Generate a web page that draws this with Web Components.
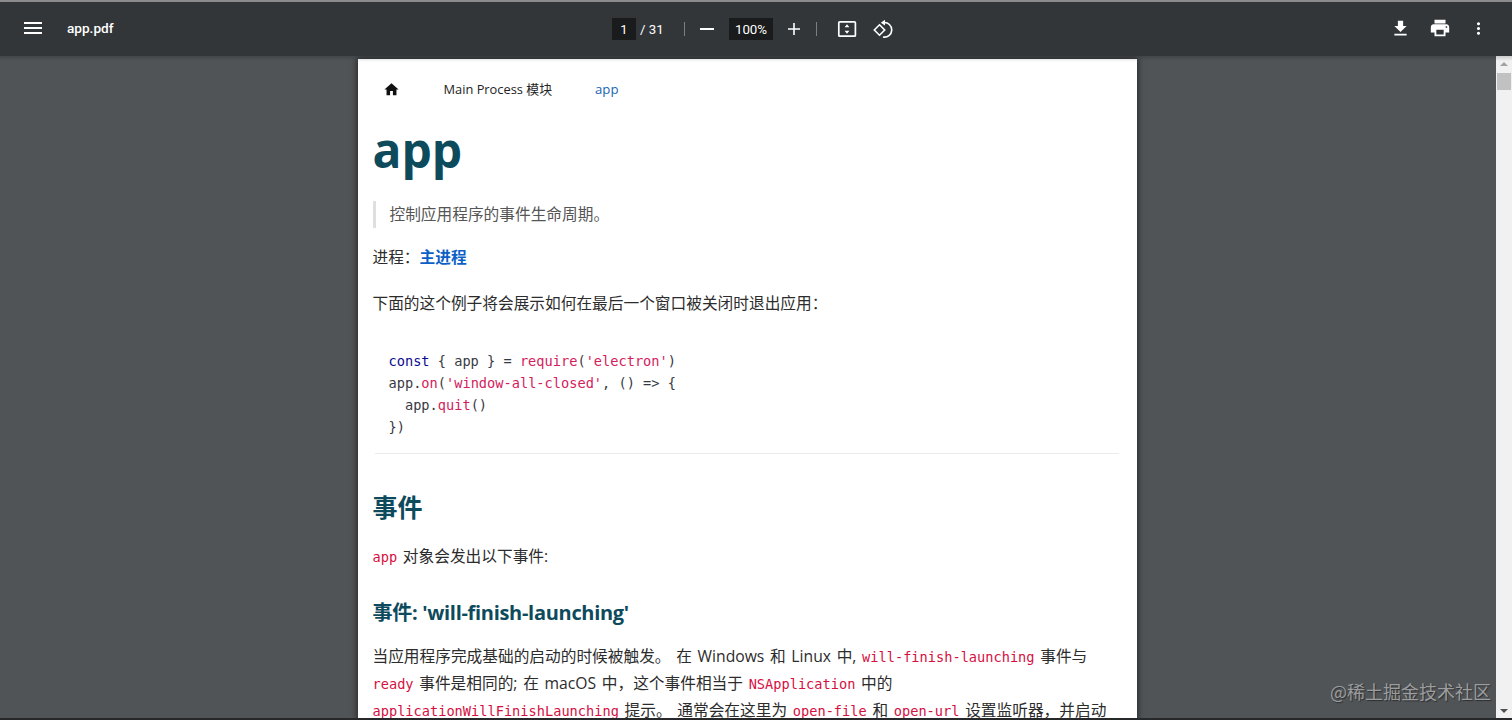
<!DOCTYPE html>
<html lang="zh"><head><meta charset="utf-8"><title>app.pdf</title>
<style>
html,body{margin:0;padding:0;height:720px;overflow:hidden;background:#525659}
body{font-family:"Open Sans","Noto Sans CJK SC",sans-serif}
</style></head><body>
<pdf-viewer>
  <pdf-toolbar slot="toolbar"></pdf-toolbar>
  <pdf-page slot="page">
    <doc-crumbs></doc-crumbs>
    <doc-title level="1">app</doc-title>
    <doc-quote>控制应用程序的事件生命周期。</doc-quote>
    <doc-p style="--mt:16px">进程：<a style="color:#0b5fc6;font-weight:700;text-decoration:none">主进程</a></doc-p>
    <doc-p style="--mt:19px">下面的这个例子将会展示如何在最后一个窗口被关闭时退出应用：</doc-p>
    <doc-code></doc-code>
    <doc-title level="2">事件</doc-title>
    <doc-p style="--mt:19px"><doc-c>app</doc-c> 对象会发出以下事件:</doc-p>
    <doc-title level="3">事件: 'will-finish-launching'</doc-title>
    <doc-p style="--mt:16px" wrap>当应用程序完成基础的启动的时候被触发。 在 Windows 和 Linux 中, <doc-c>will-finish-launching</doc-c> 事件与<br><doc-c>ready</doc-c> 事件是相同的; 在 macOS 中，这个事件相当于 <doc-c>NSApplication</doc-c> 中的<br><doc-c>applicationWillFinishLaunching</doc-c> 提示。 通常会在这里为 <doc-c>open-file</doc-c> 和 <doc-c>open-url</doc-c> 设置监听器，并启动</doc-p>
  </pdf-page>
  <pdf-scrollbar slot="scroll"></pdf-scrollbar>
  <water-mark slot="mark">@稀土掘金技术社区</water-mark>
</pdf-viewer>
<script>
const def=(name,html)=>{customElements.define(name,class extends HTMLElement{constructor(){super();this.attachShadow({mode:'open'}).innerHTML=html}})};
const ic=(d,w=24)=>`<svg width="${w}" height="${w}" viewBox="0 0 24 24" fill="#fff"><path d="${d}"/></svg>`;
def('pdf-viewer',`<style>
:host{display:grid;grid-template-rows:56px 664px;height:720px;position:relative;overflow:hidden;background:#525659}
.main{display:grid;grid-template-columns:1fr 16px;overflow:hidden;min-height:0}
.view{display:flex;justify-content:center;padding-top:3px;overflow:hidden;background:#505457;min-height:0}
.edge{position:absolute;left:0;right:0;bottom:0;height:2px;background:#26282a}
.shadow{position:absolute;left:0;right:0;top:56px;height:5px;background:linear-gradient(rgba(0,0,0,.16),rgba(0,0,0,0))}
</style><slot name="toolbar"></slot><div class="main"><div class="view"><slot name="page"></slot></div><slot name="scroll"></slot></div><div class="shadow"></div><div class="edge"></div><slot name="mark"></slot>`);
def('pdf-toolbar',`<style>
:host{display:flex;align-items:center;height:56px;box-sizing:border-box;border-top:2px solid #8a8c8e;background:#323639;color:#fff;font:400 13px Roboto,"Liberation Sans",sans-serif;position:relative;padding:0 14px 2px 21px;justify-content:space-between}
.l,.c,.r{display:flex;align-items:center}
.l{gap:22px;width:240px}
.name{font-weight:500;font-size:13.6px}
.c{position:absolute;left:612px;top:16px;height:22px}
.box{background:#191b1c;height:22px;display:flex;align-items:center;justify-content:center}
.pg{width:24px}.zm{width:44px;font-size:13.3px}
.of{margin-left:4px;width:35px;font-size:13.3px}
.sep{width:1px;height:14px;background:#7c7f81}
.r{gap:0}
.r>span{display:flex;justify-content:center;width:39px}
svg{display:block}
</style>
<div class="l">${ic('M3 18h18v-2H3v2zm0-5h18v-2H3v2zm0-7v2h18V6H3z')}<span class="name">app.pdf</span></div>
<div class="c"><span class="box pg">1</span><span class="of">/ 31</span>
<span class="sep" style="margin-left:9px"></span>
<span style="margin:0 10px 0 10px">${ic('M19 13H5v-2h14v2z')}</span>
<span class="box zm">100%</span>
<span style="margin:0 10px 0 9px">${ic('M18 12.8h-5.2V18h-1.6v-5.2H6v-1.6h5.2V6h1.6v5.2H18z')}</span>
<span class="sep"></span>
<span style="margin-left:18px"><svg width="24" height="24" viewBox="0 0 24 24" fill="none"><rect x="3.8" y="4.8" width="16.6" height="14.4" rx="1" stroke="#fff" stroke-width="1.7"/><path fill="#fff" d="M12 7.2l2.4 3h-4.8zM12 16.8l2.4-3h-4.8z"/></svg></span>
<span style="margin-left:11px"><svg width="24" height="24" viewBox="0 0 24 24" fill="none" stroke="#fff" stroke-width="1.6"><path d="M9.5 7.8L14.7 13 9.5 18.2 4.3 13z"/><path d="M13.6 5.6A7.3 7.3 0 1 1 13 20"/><path fill="#fff" stroke="none" d="M15 2.8v5.8L10.8 5.7z"/></svg></span>
</div>
<div class="r"><span>${ic('M19 9h-4V3H9v6H5l7 7 7-7zM5 18v2h14v-2H5z',21)}</span><span>${ic('M19 8H5c-1.66 0-3 1.34-3 3v6h4v4h12v-4h4v-6c0-1.66-1.34-3-3-3zm-3 11H8v-5h8v5zm3-7c-.55 0-1-.45-1-1s.45-1 1-1 1 .45 1 1-.45 1-1 1zm-1-9H6v4h12V3z',22)}</span><span>${ic('M12 8c1.1 0 2-.9 2-2s-.9-2-2-2-2 .9-2 2 .9 2 2 2zm0 2c-1.1 0-2 .9-2 2s.9 2 2 2 2-.9 2-2-.9-2-2-2zm0 6c-1.1 0-2 .9-2 2s.9 2 2 2 2-.9 2-2-.9-2-2-2z',19)}</span></div>`);
def('pdf-page',`<style>
:host{display:block;width:779px;height:661px;box-sizing:border-box;background:linear-gradient(#f3f4f4,#fff 4px);padding:0 15px;overflow:hidden;color:#2c2c2c;box-shadow:0 0 6px 1px rgba(0,0,0,.55);font:16px/27px "Open Sans","Noto Sans CJK SC",sans-serif;margin-left:-16px;position:relative;left:7px}
</style><slot></slot>`);
def('doc-crumbs',`<style>
:host{display:flex;align-items:center;height:61px;font-size:12.85px;color:#242424;padding-left:10px}
svg{display:block}
.a{margin-left:44px}.b{margin-left:43px;color:#1766b5;font-size:13.2px}
</style><svg width="17" height="17" viewBox="0 0 24 24" fill="#111"><path d="M10 20v-6h4v6h5v-8h3L12 3 2 12h3v8z"/></svg><span class="a">Main Process 模块</span><span class="b">app</span>`);
customElements.define('doc-title',class extends HTMLElement{constructor(){super();const l=this.getAttribute('level');const s={1:'font-size:48px;line-height:59px;margin-top:0',2:'font-size:25px;line-height:34px;margin-top:36px',3:'font-size:20px;line-height:28px;margin-top:29px;letter-spacing:-.3px'}[l];this.attachShadow({mode:'open'}).innerHTML=`<style>:host{display:block;font-weight:700;color:#0d4a5c;${s}}</style><slot></slot>`}});
def('doc-quote',`<style>
:host{display:block;margin-top:22px;border-left:3px solid #dfdfdf;padding-left:14px;height:27px;color:#555;font-size:15.7px;line-height:27px}
</style><slot></slot>`);
def('doc-p',`<style>
:host{display:block;margin-top:var(--mt,16px);font-size:15.7px;line-height:27px;white-space:nowrap;word-spacing:1.6px}
</style><slot></slot>`);
def('doc-c',`<style>
:host{display:inline;font:13.65px "DejaVu Sans Mono","Liberation Mono",monospace;color:#d6103f;word-spacing:0}
</style><slot></slot>`);
def('doc-code',`<style>
:host{display:block;margin-top:21px;padding:12px 3px 15px 14px;border-bottom:1px solid #ececec;margin-left:2px;margin-right:3px;font:13.65px/22px "DejaVu Sans Mono","Liberation Mono",monospace;color:#383a42;white-space:pre}
.k{color:#0a0a8f}.r{color:#d4215c}
</style><span class="k">const</span> { app } = <span class="r">require</span>(<span class="r">'electron'</span>)
app.<span class="r">on</span>(<span class="r">'window-all-closed'</span>, () =&gt; {
  app.<span class="r">quit</span>()
})`);
def('pdf-scrollbar',`<style>
:host{display:block;width:16px;height:664px;background:#f1f1f1;position:relative}
.up,.dn{width:0;height:0;left:4px;border-left:4px solid transparent;border-right:4px solid transparent;position:absolute}
.up{top:6px;border-bottom:4px solid #a3a3a3}
.dn{bottom:7px;border-top:4px solid #505050}
.th{position:absolute;top:17px;left:1px;width:14px;height:17px;background:#c1c1c1}
</style><div class="up"></div><div class="th"></div><div class="dn"></div>`);
def('water-mark',`<style>
:host{position:absolute;right:21px;bottom:17px;font:18px/24px "Noto Sans CJK SC",sans-serif;color:#9b9d9e;text-shadow:1px 1px 1px rgba(0,0,0,.45)}
</style><slot></slot>`);
</script></body></html>
